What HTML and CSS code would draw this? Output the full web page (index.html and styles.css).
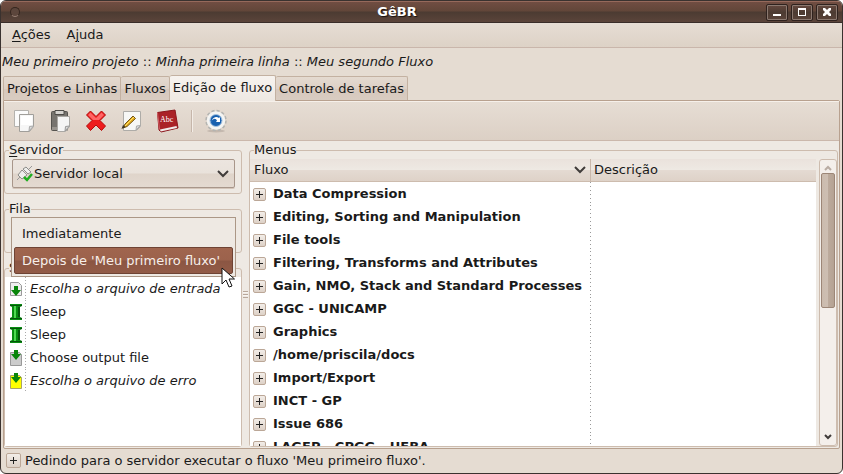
FILE: index.html
```html
<!DOCTYPE html>
<html lang="pt-BR">
<head>
<meta charset="utf-8">
<title>GêBR</title>
<link rel="stylesheet" href="styles.css">
</head>
<body>
<div class="window">
  <header class="titlebar">
    <span class="orb"></span>
    <h1 class="title">GêBR</h1>
    <div class="controls">
      <button class="control" aria-label="Minimizar"><svg width="18" height="13" viewBox="0 0 18 13"><path d="M5 8h8v2H5z" fill="#fff"/></svg></button>
      <button class="control" aria-label="Maximizar"><svg width="18" height="13" viewBox="0 0 18 13"><path d="M5 2h8v8H5zM6 4v5h6V4z" fill="#fff" fill-rule="evenodd"/></svg></button>
      <button class="control" aria-label="Fechar"><svg width="18" height="13" viewBox="0 0 18 13"><path d="M5 2h2l2 2 2-2h2v2l-2 2 2 2v2h-2L9 8l-2 2H5V8l2-2-2-2z" fill="#fff"/></svg></button>
    </div>
  </header>
  <nav class="menubar">
    <button class="menu"><u>A</u>ções</button>
    <button class="menu">A<u>j</u>uda</button>
  </nav>
  <p class="path"><i>Meu primeiro projeto</i> :: <i>Minha primeira linha</i> :: <i>Meu segundo Fluxo</i></p>
  <div class="tabs" role="tablist">
    <button class="tab" role="tab">Projetos e Linhas</button>
    <button class="tab" role="tab">Fluxos</button>
    <button class="tab active" role="tab" aria-selected="true">Edição de fluxo</button>
    <button class="tab" role="tab">Controle de tarefas</button>
  </div>
  <main class="page">
    <div class="toolbar">
      <button class="tool" aria-label="Copiar"><svg width="24" height="24" viewBox="0 0 24 24"><path d="M2.500 1.500h14v16h-14z" fill="#fbfbfb" stroke="#b4b2ae"/><path d="M7.500 5.500h14v12l-4 5h-10z" fill="#f6f6f6" stroke="#a09e9a"/><path d="M9 7h11v9H9z" fill="#fff"/><path d="M17 22l.5-4.500 4-.5z" fill="#ddd" stroke="#aaa"/></svg></button>
      <button class="tool" aria-label="Colar"><svg width="24" height="24" viewBox="0 0 24 24"><rect x="3.500" y="2.500" width="16" height="19" rx="1" fill="#77746f" stroke="#55534f"/><path d="M4 18h7v3H4z" fill="#99958f"/><path d="M7 1.500h9v4H7z" fill="#d5d3cf" stroke="#4e4c49"/><path d="M9.500 7.500h12v10l-4 5h-8z" fill="#f5f5f5" stroke="#aaa8a4"/><path d="M17 22l.5-4.500 4-.5z" fill="#ddd" stroke="#999"/></svg></button>
      <button class="tool" aria-label="Excluir"><svg width="24" height="24" viewBox="0 0 24 24"><path d="M6.500 2L12 7.500 17.500 2l4 4L16 11.500l5.500 5.500-4 4.500L12 16l-5.500 5.500-4-4.500L8 11.500 2.500 6z" fill="#ee1c1c" stroke="#b30b0b" stroke-linejoin="round"/><path d="M6.500 3.500L12 9l5.500-5.500L20 6l-5 5H9L4 6z" fill="#f66"/></svg></button>
      <button class="tool" aria-label="Editar"><svg width="24" height="24" viewBox="0 0 24 24"><path d="M3.500 2.500h17v15l-4 4h-13z" fill="#f7f7f5" stroke="#aeaca8"/><path d="M16 21l.5-4 4-.5z" fill="#ddd" stroke="#aaa"/><path d="M3 19l2-4 8-8 2.500 2.500-8.500 8z" fill="#e5ac18" stroke="#70541b"/><path d="M5 17l9-9" stroke="#ffdf70"/><path d="M1.500 20l1.500-4 2.500 2z" fill="#3c3427"/></svg></button>
      <button class="tool" aria-label="Ajuda do programa"><svg width="24" height="24" viewBox="0 0 24 24"><path d="M1.500 3.500L19 1l3 18-17 4-2-2z" fill="#aa2228" stroke="#8b171d" stroke-linejoin="round"/><path d="M4 20.500L20.500 17l.5 2-16.500 3.500z" fill="#f0eaea"/><path d="M1.500 3.500l2 17" stroke="#d46468"/><text x="4" y="13" class="book-label">Abc</text></svg></button>
      <span class="divider"></span>
      <button class="tool" aria-label="Executar"><svg width="24" height="24" viewBox="0 0 24 24"><ellipse cx="12" cy="22" rx="9" ry="1.500" fill="#c4b8ae"/><circle cx="12" cy="11.500" r="9.500" fill="none" stroke="#b4b4b1" stroke-width="2.500" stroke-dasharray="3 2"/><circle cx="12" cy="11.500" r="9.300" fill="#f4f4f2"/><circle cx="12" cy="11.500" r="6" fill="#1760af" stroke="#a6c2df"/><path d="M14.500 15.500a4.500 4.500 0 0 1-5-7l-1-1h5v4l-1.500-1a2.500 2.500 0 0 0 2.500 5z" transform="rotate(90 12 11.500)" fill="#fff"/></svg></button>
    </div>
    <div class="panes">
      <div class="side">
        <fieldset class="frame choice">
          <legend><label for="server"><u>S</u>ervidor</label></legend>
          <div class="combo">
            <svg class="combo-icon" width="16" height="16" viewBox="0 0 16 16"><path d="M9 1l5 5-3 2-5-5zM5 4l5 5-5 4-4-4z" fill="#eeeeec" stroke="#8c8c89"/><path d="M0 14l3-3M12 3l3-3M6 5l4 4" stroke="#999"/><path d="M7 11l3 3 5-6" fill="none" stroke="#1fae1f" stroke-width="2.500"/></svg>
            <select id="server"><option>Servidor local</option></select>
            <svg class="combo-arrow" width="12" height="8" viewBox="0 0 12 8"><path d="M1 1l5 5 5-5" fill="none" stroke="#403c3a" stroke-width="2"/></svg>
          </div>
        </fieldset>
        <fieldset class="frame choice">
          <legend>Fila</legend>
          <div class="popup" role="listbox" aria-label="Fila">
            <button class="option" role="option">Imediatamente</button>
            <button class="option selected" role="option" aria-selected="true">Depois de 'Meu primeiro fluxo'</button>
            <svg class="pointer" width="14" height="21" viewBox="0 0 14 21"><path d="M1 1v16l4-4 3 7 3-1-3-7h5.500z" fill="#fff" stroke="#111"/></svg>
          </div>
        </fieldset>
        <fieldset class="frame sequence">
          <legend>S</legend>
          <ul class="steps">
            <li class="step"><svg width="14" height="16" viewBox="0 0 14 16"><path d="M1.500 1.500h8l3 3v10h-11z" fill="#eee" stroke="#999"/><path d="M5 5h4v4h3l-5 6-5-6h3z" fill="#08850a"/></svg><i>Escolha o arquivo de entrada</i></li>
            <li class="step"><svg width="14" height="16" viewBox="0 0 14 16"><path d="M1 0h12v2l-2 1v10l2 1v2H1v-2l2-1V3L1 2z" fill="#078d10"/><path d="M5 2h2v12H5z" fill="#4ed951"/><path d="M9 3h2v10H9zM1 1h12v1H1zM1 14h12v1H1z" fill="#04550a"/></svg><span>Sleep</span></li>
            <li class="step"><svg width="14" height="16" viewBox="0 0 14 16"><path d="M1 0h12v2l-2 1v10l2 1v2H1v-2l2-1V3L1 2z" fill="#078d10"/><path d="M5 2h2v12H5z" fill="#4ed951"/><path d="M9 3h2v10H9zM1 1h12v1H1zM1 14h12v1H1z" fill="#04550a"/></svg><span>Sleep</span></li>
            <li class="step"><svg width="14" height="16" viewBox="0 0 14 16"><path d="M1.500 2.500h9l2 2v11h-11z" fill="#ccc" stroke="#999"/><path d="M5 0h4v4h3L7 10 2 4h3z" fill="#08850a"/></svg><span>Choose output file</span></li>
            <li class="step"><svg width="14" height="16" viewBox="0 0 14 16"><path d="M1.500 2.500h9l2 2v11h-11z" fill="#ff0" stroke="#aaa36a"/><path d="M5 0h4v4h3L7 10 2 4h3z" fill="#08850a"/></svg><i>Escolha o arquivo de erro</i></li>
          </ul>
        </fieldset>
      </div>
      <div class="splitter"><span class="grip"></span></div>
      <fieldset class="frame menus">
        <legend>Menus</legend>
        <div class="browser">
          <div class="listing">
            <table>
              <colgroup><col class="name-col"><col></colgroup>
              <thead><tr><th><span class="sort">Fluxo<svg width="12" height="8" viewBox="0 0 12 8"><path d="M1 1l5 5 5-5" fill="none" stroke="#403c3a" stroke-width="2"/></svg></span></th><th>Descrição</th></tr></thead>
              <tbody>
                <tr><td><button class="expander" aria-label="Expandir"></button>Data Compression</td><td></td></tr>
                <tr><td><button class="expander" aria-label="Expandir"></button>Editing, Sorting and Manipulation</td><td></td></tr>
                <tr><td><button class="expander" aria-label="Expandir"></button>File tools</td><td></td></tr>
                <tr><td><button class="expander" aria-label="Expandir"></button>Filtering, Transforms and Attributes</td><td></td></tr>
                <tr><td><button class="expander" aria-label="Expandir"></button>Gain, NMO, Stack and Standard Processes</td><td></td></tr>
                <tr><td><button class="expander" aria-label="Expandir"></button>GGC - UNICAMP</td><td></td></tr>
                <tr><td><button class="expander" aria-label="Expandir"></button>Graphics</td><td></td></tr>
                <tr><td><button class="expander" aria-label="Expandir"></button>/home/priscila/docs</td><td></td></tr>
                <tr><td><button class="expander" aria-label="Expandir"></button>Import/Export</td><td></td></tr>
                <tr><td><button class="expander" aria-label="Expandir"></button>INCT - GP</td><td></td></tr>
                <tr><td><button class="expander" aria-label="Expandir"></button>Issue 686</td><td></td></tr>
                <tr><td><button class="expander" aria-label="Expandir"></button>LAGEP - CPGG - UFBA</td><td></td></tr>
              </tbody>
            </table>
          </div>
          <div class="scrollbar">
            <svg class="scroll-arrow" width="8" height="6" viewBox="0 0 8 6"><path d="M1 5l3-3 3 3" fill="none" stroke="#b9aca3" stroke-width="2"/></svg>
            <div class="track"><div class="thumb"></div></div>
            <svg class="scroll-arrow" width="8" height="6" viewBox="0 0 8 6"><path d="M1 1l3 3 3-3" fill="none" stroke="#403c3a" stroke-width="2"/></svg>
          </div>
        </div>
      </fieldset>
    </div>
  </main>
  <footer class="status"><button class="expander large" aria-label="Detalhes"></button><span>Pedindo para o servidor executar o fluxo 'Meu primeiro fluxo'.</span></footer>
</div>
</body>
</html>
```

FILE: styles.css
```css
* { box-sizing: border-box; }

body {
  margin: 0;
  background: #fff;
  color: #1a1a1a;
  font: 13px/18px "DejaVu Sans", sans-serif;
}

button, select {
  margin: 0;
  padding: 0;
  border: 0;
  background: none;
  color: inherit;
  font: inherit;
}

svg { display: block; flex: none; }
u { text-underline-offset: 2px; }

.window {
  display: flex;
  flex-direction: column;
  height: 100vh;
  padding-bottom: 1px;
  overflow: hidden;
  border: 1px solid #3a322f;
  border-radius: 6px;
  background: #e5dcd2;
}

.titlebar {
  display: flex;
  align-items: center;
  flex: none;
  height: 22px;
  padding: 0 4px 0 9px;
  border-top: 1px solid #96695b;
  border-bottom: 1px solid #392d29;
  background: linear-gradient(#704d42, #624639 45%, #4c3b32 50%, #5b443a);
}

.orb {
  width: 10px;
  height: 10px;
  margin-right: 8px;
  border: 1px solid #35261f;
  border-bottom-color: #9b8277;
  border-radius: 50%;
  background: #5c463c;
}

.title {
  flex: 1;
  margin: 0;
  color: #fff;
  font-size: 13px;
  line-height: 18px;
  text-align: center;
  text-shadow: 1px 1px 1px #17100d;
}

.controls { display: flex; gap: 3px; }

.control {
  width: 22px;
  height: 17px;
  padding: 1px;
  border: 1px solid #2f221e;
  border-radius: 2px;
  background: linear-gradient(#66493f, #4c3b32 50%, #5b443a);
  box-shadow: inset 0 0 0 1px #8b7970;
}

.menubar {
  display: flex;
  flex: none;
  gap: 16px;
  height: 25px;
  padding: 0 11px;
  border-bottom: 1px solid #c9b6ab;
  background: linear-gradient(#e6ddd4, #ddd2c6);
}

.path {
  flex: none;
  height: 27px;
  margin: 0;
  padding: 5px 1px;
  white-space: pre;
}

.tabs {
  display: flex;
  align-items: flex-end;
  flex: none;
  height: 25px;
  padding-left: 2px;
}

.tab {
  height: 24px;
  padding: 0 3px;
  border: 1px solid #c3b1a1;
  border-left-width: 0;
  border-bottom: 0;
  border-radius: 2px 2px 0 0;
  background: linear-gradient(#e4dad0, #ddd0c6 50%, #d6c8bd 52%, #d9ccc1);
}

.tab:first-child { border-left-width: 1px; }

.tab.active {
  z-index: 1;
  height: 26px;
  margin-bottom: -1px;
  padding-bottom: 2px;
  background: linear-gradient(#f7f3ef, #eee8e2);
}

.page {
  display: flex;
  flex-direction: column;
  flex: 1;
  min-height: 0;
  margin: 0 2px;
  border: 1px solid #b8a18f;
  border-radius: 0 2px 2px 2px;
  background: #eee9e3;
}

.toolbar {
  display: flex;
  align-items: center;
  flex: none;
  gap: 12px;
  height: 40px;
  padding: 0 8px;
  border-top: 1px solid #f6f0ea;
  border-bottom: 1px solid #cbb8ac;
  background: linear-gradient(#e6ddd4, #dcd0c5);
}

.tool { width: 24px; height: 24px; }
.book-label { fill: #fff; font: 8px "Liberation Serif", serif; }

.divider {
  width: 2px;
  height: 22px;
  margin: 0 -1px;
  border-left: 1px solid #c6b6aa;
  border-right: 1px solid #f3ede7;
}

.panes {
  display: flex;
  flex: 1;
  min-height: 0;
  padding: 0 1px 1px 0;
}

.side {
  display: flex;
  flex-direction: column;
  flex: none;
  gap: 6px;
  width: 238px;
}

.frame {
  position: relative;
  min-width: 0;
  margin: 0;
  padding: 0;
  border: 1px solid #cdbcae;
  border-radius: 3px;
}

.frame legend { height: 18px; margin-left: 4px; padding: 0; }
.choice { flex: none; height: 53px; }

.combo {
  position: relative;
  height: 29px;
  margin: 0 6px 0 7px;
}

.combo select {
  width: 100%;
  height: 29px;
  padding: 0 24px 0 21px;
  border: 1px solid #a8968a;
  border-radius: 2px;
  appearance: none;
  background: linear-gradient(#ece5df, #e9e2db 48%, #dfd4ca 52%, #e4dad1);
  box-shadow: 0 1px 0 #d4c5b9;
}

.combo-icon { position: absolute; top: 7px; left: 5px; }
.combo-arrow { position: absolute; top: 11px; right: 6px; }

.popup {
  position: absolute;
  z-index: 2;
  top: -1px;
  left: 6px;
  right: 5px;
  padding: 2px;
  border: 1px solid #ab9786;
  background: #eee9e3;
}

.option {
  display: block;
  width: 100%;
  height: 27px;
  padding: 0 8px;
  text-align: left;
}

.option.selected {
  border: 1px solid #6e4334;
  border-radius: 2px;
  padding: 0 7px;
  background: linear-gradient(#a0654e, #9c624c 48%, #8b5643 52%, #925b47);
  color: #f7efea;
}

.pointer { position: absolute; right: 0; bottom: -12px; }

.sequence { flex: 1; min-height: 0; }

.steps {
  height: 100%;
  margin: 0;
  padding: 0 0 0 4px;
  background: #fff;
  list-style: none;
}

.step {
  display: flex;
  align-items: center;
  gap: 7px;
  height: 23px;
  background: linear-gradient(#aaa 1px, transparent 1px) 16px 0 / 1px 3px repeat-y;
}

.splitter {
  display: flex;
  align-items: center;
  justify-content: center;
  flex: none;
  width: 7px;
}

.grip {
  width: 5px;
  height: 7px;
  background: repeating-linear-gradient(#b8a79a 0 1px, #f8f5f2 1px 2px, transparent 2px 3px);
}

.menus {
  display: flex;
  flex: 1;
}

.browser {
  display: flex;
  gap: 3px;
  width: 100%;
  height: 100%;
}

.listing {
  flex: 1;
  min-width: 0;
  overflow: hidden;
  background: #fff;
}

table {
  width: 100%;
  border-spacing: 0;
  border-collapse: separate;
  table-layout: fixed;
}

.name-col { width: 340px; }

th {
  height: 23px;
  padding: 0 4px;
  border-bottom: 1px solid #cdbcae;
  background: linear-gradient(#eae2dc, #eee9e3 49%, #e4dad2 52%, #ded2c8);
  font-weight: normal;
  text-align: left;
}

th + th { padding: 0 3px; border-left: 1px solid #c9b8ab; }

.sort {
  display: flex;
  align-items: center;
  justify-content: space-between;
}

td {
  height: 23px;
  padding: 0 0 0 3px;
  font-weight: bold;
  white-space: nowrap;
}

td + td { background: linear-gradient(#999 1px, transparent 1px) 0 0 / 1px 4px repeat-y; }

.expander {
  width: 13px;
  height: 13px;
  margin-right: 7px;
  border: 1px solid #bba797;
  border-radius: 2px;
  background:
    linear-gradient(#222, #222) center / 7px 1px no-repeat,
    linear-gradient(#222, #222) center / 1px 7px no-repeat,
    linear-gradient(#f2ede8, #ddd1c7);
  vertical-align: middle;
}

.expander.large { width: 15px; height: 15px; margin-right: 4px; }

.scrollbar {
  display: flex;
  flex-direction: column;
  align-items: center;
  flex: none;
  width: 18px;
  padding: 5px 0;
  border: 1px solid #cdbcae;
  border-radius: 3px;
  background: #f4efeb;
}

.track { flex: 1; width: 16px; padding: 2px 0; }

.thumb {
  height: 52%;
  margin: 0 1px;
  border: 1px solid #9c8677;
  border-radius: 2px;
  background: linear-gradient(90deg, #cbbbae, #cdbeb2 48%, #bcaa9c 52%, #b5a293);
}

.status {
  display: flex;
  align-items: center;
  flex: none;
  height: 23px;
  padding: 0 5px;
}
```
